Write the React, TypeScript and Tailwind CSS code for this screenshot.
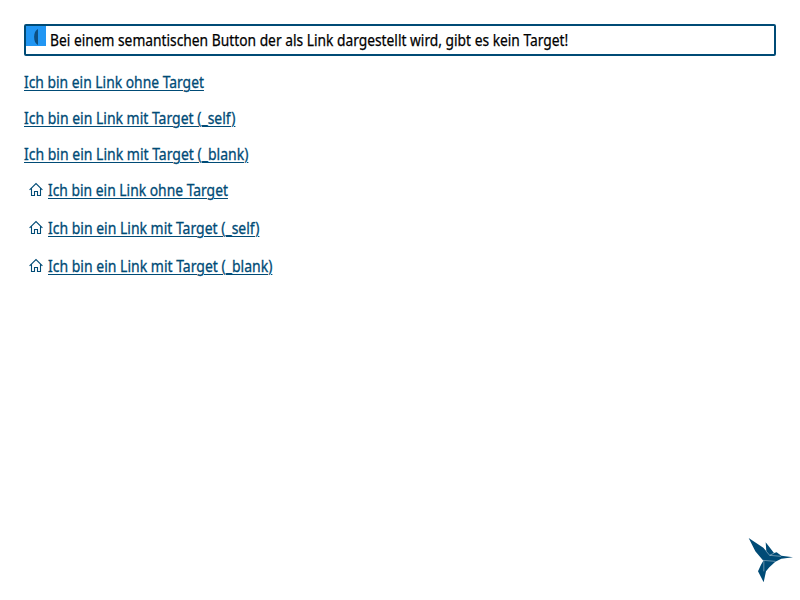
const font = "font-['Noto_Sans','Open_Sans',sans-serif]";

function HomeIcon() {
  return (
    <svg className="mr-[5px] ml-[5px] h-[14px] w-[14px] shrink-0 -translate-y-px" viewBox="0 0 14 14" fill="none" stroke="#004b76" strokeWidth="1.1">
      <path d="M.6 7.900 7 1.600l6.400 6.300M2.500 6.500v7h3v-4h3v4h3v-7" />
    </svg>
  );
}

const links = [
  { text: 'Ich bin ein Link ohne Target', width: 'w-[180px]', scale: 'scale-x-[0.866]' },
  { text: 'Ich bin ein Link mit Target (_self)', width: 'w-[212px]', scale: 'scale-x-[0.8735]' },
  { text: 'Ich bin ein Link mit Target (_blank)', width: 'w-[225px]', scale: 'scale-x-[0.875]' },
];

function TextLink({ text, width, scale }: { text: string; width: string; scale: string }) {
  return (
    <a href="#" className={`${width} block whitespace-nowrap text-[#004b76]`}>
      <span className={`${scale} inline-block origin-left text-base leading-6 underline decoration-1 underline-offset-[1.5px] [-webkit-text-stroke:0.3px_#004b76]`}>
        {text}
      </span>
    </a>
  );
}

export default function App() {
  return (
    <main className={`relative h-[600px] w-[800px] overflow-hidden bg-white p-6 ${font}`}>
      <div className="flex h-8 items-start rounded-[2px] border-2 border-[#004b76]">
        <svg className="h-5 w-5 shrink-0" viewBox="0 0 20 20">
          <path fill="#2196f3" d="M0 0h20v20H0z" />
          <path fill="#0d4f82" d="M12 3v16C6.800 17 6.800 5 12 3z" />
        </svg>
        <span className="ml-1 inline-block origin-left scale-x-[0.862] whitespace-nowrap text-base leading-[29px] text-black [-webkit-text-stroke:0.25px_#000]">
          Bei einem semantischen Button der als Link dargestellt wird, gibt es kein Target!
        </span>
      </div>
      <div className="mt-[14px] flex flex-col gap-3">
        {links.map((link) => <div className="flex h-6" key={link.text}><TextLink {...link} /></div>)}
      </div>
      <div className="mt-3 flex flex-col gap-[14px]">
        {links.map((link) => <div className="flex h-6 items-center" key={link.text}><HomeIcon /><TextLink {...link} /></div>)}
      </div>
      <svg className="absolute top-[537px] left-[748px] h-[46px] w-[46px]" viewBox="24 21 138 138">
        <path fill="#004b76" d="M26 24 70 53 79 64 77 37 102 69 110 67 118 73 124 77 159 82 124 86 106 95 88 112 78 124 71 157 54 124 63 104 70 92 46 64z" />
        <path fill="none" stroke="#fff" strokeWidth="1.200" d="M78 63l11 13 14-7M89 76l34 3M68 91l38 3M71.500 92v32" />
      </svg>
    </main>
  );
}
